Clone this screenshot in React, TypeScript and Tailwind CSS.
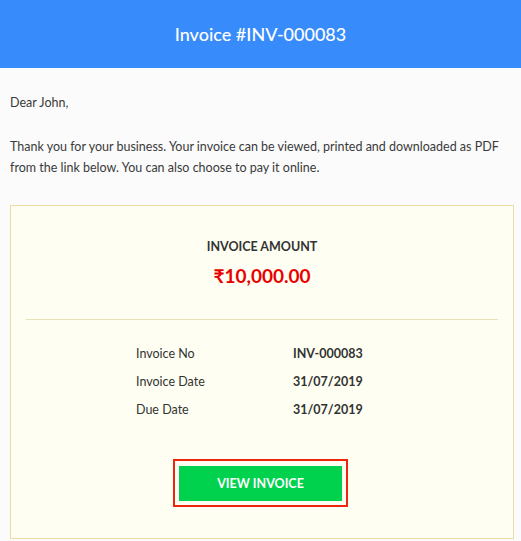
export default function App() {
  const rows = [
    ["Invoice No", "INV-000083"],
    ["Invoice Date", "31/07/2019"],
    ["Due Date", "31/07/2019"],
  ];
  return (
    <div
      className="w-[521px] h-[541px] overflow-hidden bg-[#fbfbfb] text-[#333333]"
      style={{ fontFamily: "Lato, 'Noto Sans', 'DejaVu Sans', sans-serif" }}
    >
      <div className="h-[68px] bg-[#388bfa] flex items-center justify-center text-white text-[18px] font-medium">
        Invoice #INV-000083
      </div>
      <div className="pl-[10px] pr-[7px] pt-[24px] text-[12.5px] leading-[21px] text-[#3a3a3a]">
        <p>Dear John,</p>
        <p className="mt-[23px]">
          Thank you for your business. Your invoice can be viewed, printed and downloaded as PDF from the link below. You can also choose to pay it online.
        </p>
        <div className="mt-[27px] border border-[#e8dca3] bg-[#fefff2] px-[15px] pt-[31px] pb-[31px]">
          <div className="text-center text-[12.5px] leading-[20px] font-bold text-[#333333]">INVOICE AMOUNT</div>
          <div className="mt-[6px] text-center text-[19px] leading-[26px] font-bold text-[#e80000]">₹10,000.00</div>
          <div className="mt-[30px] h-px bg-[#e8e0b8]" />
          <div className="mt-[20px] mx-auto w-[252px] grid grid-cols-[157px_95px] text-[12.5px] leading-[28px] text-[#333333]">
            {rows.map(([k, v]) => (
              <>
                <div key={k}>{k}</div>
                <div key={k + "v"} className="font-bold">{v}</div>
              </>
            ))}
          </div>
          <div className="mt-[35px] flex justify-center pr-[3px]">
            <div className="border-2 border-[#f0260c] px-[4px] pt-[5px] pb-[4px]">
              <div className="w-[163px] h-[35px] bg-[#00d24e] flex items-center justify-center text-white text-[12.5px] font-bold">
                VIEW INVOICE
              </div>
            </div>
          </div>
        </div>
      </div>
    </div>
  );
}
